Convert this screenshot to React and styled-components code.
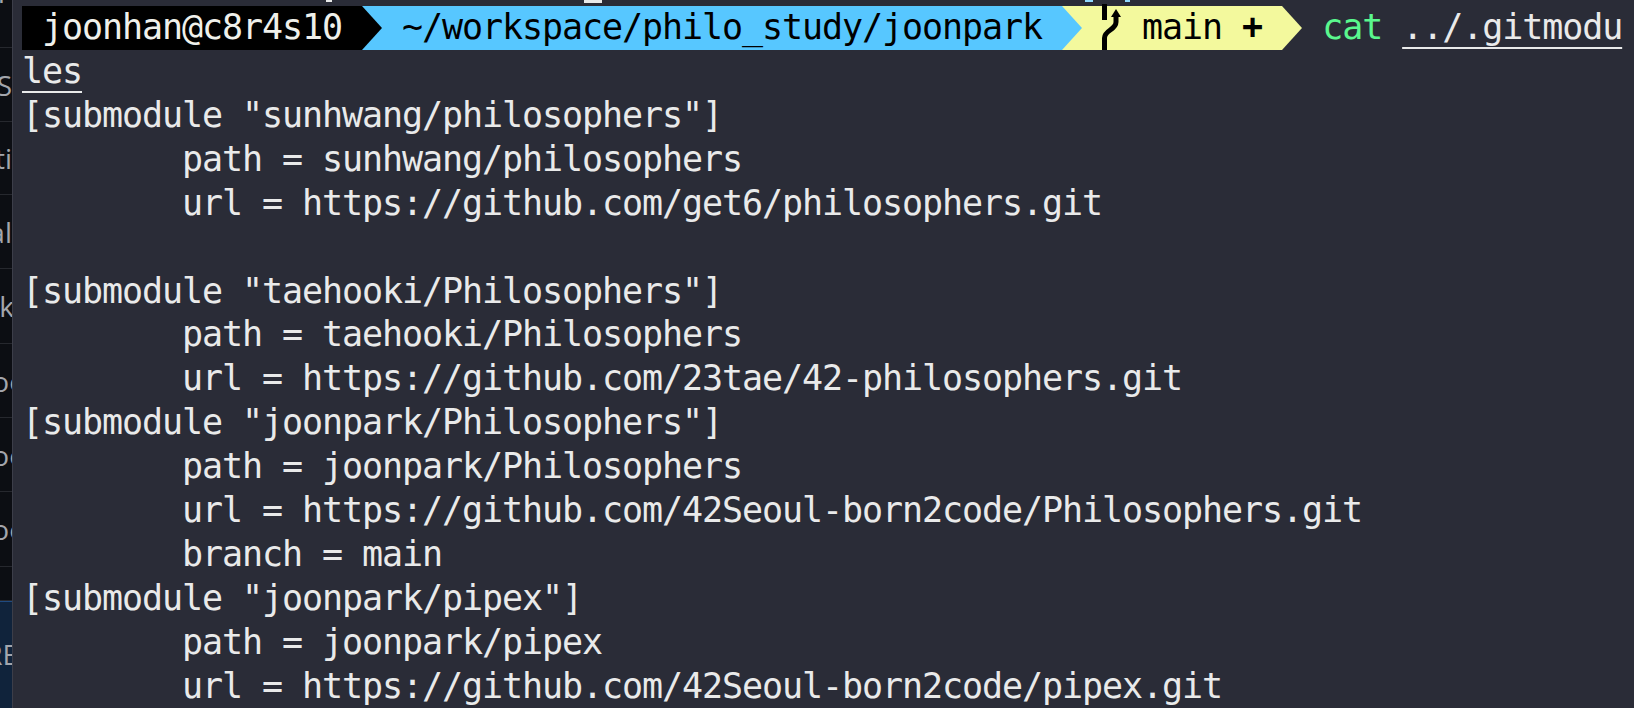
import React from "react";
import styled, { createGlobalStyle } from "styled-components";

const Global = createGlobalStyle`
  html, body { margin: 0; padding: 0; background: #2a2c37; }
  body { width: 1634px; height: 708px; overflow: hidden; }
`;

const Screen = styled.div`
  display: flex;
  width: 1634px;
  height: 708px;
  overflow: hidden;
`;

const Sidebar = styled.aside`
  flex: 0 0 12px;
  display: flex;
  flex-direction: column;
  overflow: hidden;
  background: #0c0e13;
  border-right: 1px solid #3c3e49;
  font-family: "Open Sans", sans-serif;
  font-size: 28px;
  color: #a3a6ad;
`;

const SideRow = styled.div`
  flex: 0 0 ${(p) => p.$h}px;
  box-sizing: border-box;
  display: flex;
  justify-content: flex-end;
  align-items: ${(p) => p.$align || "center"};
  border-bottom: 1px solid #26282e;
  white-space: nowrap;
  overflow: hidden;
`;

const SideLabel = styled.span`
  margin-right: ${(p) => p.$shift || 0}px;
  margin-top: ${(p) => p.$lift || 0}px;
`;

const SideFooter = styled.div`
  flex: 1;
  display: flex;
  justify-content: flex-end;
  align-items: center;
  padding-bottom: 2px;
  overflow: hidden;
  background: #10233b;
  border-top: 1px solid #1f4a80;
  white-space: nowrap;
`;

const Terminal = styled.main`
  flex: 1;
  box-sizing: border-box;
  padding: 0 0 0 9px;
  font-family: "DejaVu Sans Mono", monospace;
  font-size: 35px;
  letter-spacing: -1.07px;
  line-height: 43.9px;
  color: #e9eaea;
  white-space: pre;
  tab-size: 8;
  background: #2a2c37;
`;

const Residue = styled.div`
  display: flex;
  height: 6px;
`;

const ResidueMark = styled.i`
  display: block;
  flex: 0 0 ${(p) => p.$w}px;
  height: ${(p) => p.$h}px;
  margin-left: ${(p) => p.$gap}px;
  background: ${(p) => p.$color};
`;

const PromptLine = styled.div`
  display: flex;
  align-items: stretch;
  height: 44px;
`;

const Segment = styled.span`
  display: flex;
  align-items: center;
  padding: 0 20px;
  background: ${(p) => p.$bg};
  color: ${(p) => p.$fg};
`;

const Arrow = styled.svg`
  flex: 0 0 20px;
  display: block;
  width: 20px;
  height: 44px;
  background: ${(p) => p.$bg};
`;

const BranchIcon = styled.svg`
  display: block;
  flex: 0 0 20px;
  width: 20px;
  height: 46px;
  margin: -2px 20px 0 0;
`;

const Plus = styled.span`
  margin-left: 20px;
  font-weight: 700;
`;

const Command = styled.span`
  margin-left: 20px;
  color: #5af78e;
`;

const Arg = styled.span`
  margin-left: 20px;
  text-decoration: underline;
  text-decoration-thickness: 2px;
  text-underline-offset: 8px;
  text-decoration-skip-ink: none;
`;

const WrappedArg = styled.div`
  height: 43.9px;
  & > span {
    text-decoration: underline;
    text-decoration-thickness: 2px;
    text-underline-offset: 8px;
    text-decoration-skip-ink: none;
  }
`;

const Line = styled.div`
  min-height: 43.9px;
`;

const sideRows = [
  { h: 48, label: "F", align: "flex-start", shift: 0, lift: -27 },
  { h: 74, label: "S" },
  { h: 73, label: "ti" },
  { h: 74, label: "al" },
  { h: 75, label: "rk", shift: -2 },
  { h: 74, label: "oo", shift: -14 },
  { h: 74, label: "oo", shift: -14 },
  { h: 75, label: "oo", shift: -14 },
  { h: 34, label: "" },
];

const residue = [
  { gap: 304, w: 6, h: 2, color: "#e9eaea" },
  { gap: 252, w: 18, h: 3, color: "#e9eaea" },
  { gap: 483, w: 8, h: 2, color: "#8fd8ff" },
  { gap: 32, w: 5, h: 2, color: "#8fd8ff" },
];

const lines = [
  '[submodule "sunhwang/philosophers"]',
  "\tpath = sunhwang/philosophers",
  "\turl = https://github.com/get6/philosophers.git",
  "",
  '[submodule "taehooki/Philosophers"]',
  "\tpath = taehooki/Philosophers",
  "\turl = https://github.com/23tae/42-philosophers.git",
  '[submodule "joonpark/Philosophers"]',
  "\tpath = joonpark/Philosophers",
  "\turl = https://github.com/42Seoul-born2code/Philosophers.git",
  "\tbranch = main",
  '[submodule "joonpark/pipex"]',
  "\tpath = joonpark/pipex",
  "\turl = https://github.com/42Seoul-born2code/pipex.git",
];

export default function App() {
  return (
    <>
      <Global />
      <Screen>
        <Sidebar>
          {sideRows.map((r, i) => (
            <SideRow key={i} $h={r.h} $align={r.align}>
              <SideLabel $shift={r.shift} $lift={r.lift}>{r.label}</SideLabel>
            </SideRow>
          ))}
          <SideFooter>
            <SideLabel $shift={-6}>RE</SideLabel>
          </SideFooter>
        </Sidebar>
        <Terminal>
          <Residue>
            {residue.map((m, i) => (
              <ResidueMark key={i} $gap={m.gap} $w={m.w} $h={m.h} $color={m.color} />
            ))}
          </Residue>
          <PromptLine>
            <Segment $bg="#000" $fg="#eff0eb">joonhan@c8r4s10</Segment>
            <Arrow $bg="#57c7ff" viewBox="0 0 20 44">
              <polygon points="0,0 20,22 0,44" fill="#000" />
            </Arrow>
            <Segment $bg="#57c7ff" $fg="#000">~/workspace/philo_study/joonpark</Segment>
            <Arrow $bg="#f3f99d" viewBox="0 0 20 44">
              <polygon points="0,0 20,22 0,44" fill="#57c7ff" />
            </Arrow>
            <Segment $bg="#f3f99d" $fg="#000">
              <BranchIcon viewBox="0 0 20 46">
                <path
                  d="M2.5 0V16M2.5 46V34C2.5 26 14 26 14 18V11"
                  fill="none"
                  stroke="#000"
                  strokeWidth="5"
                />
                <polygon points="14,5 19,13 9,13" fill="#000" />
              </BranchIcon>
              main<Plus>+</Plus>
            </Segment>
            <Arrow viewBox="0 0 20 44">
              <polygon points="0,0 20,22 0,44" fill="#f3f99d" />
            </Arrow>
            <Command>cat</Command>
            <Arg>../.gitmodu</Arg>
          </PromptLine>
          <WrappedArg>
            <span>les</span>
          </WrappedArg>
          {lines.map((l, i) => (
            <Line key={i}>{l}</Line>
          ))}
        </Terminal>
      </Screen>
    </>
  );
}
